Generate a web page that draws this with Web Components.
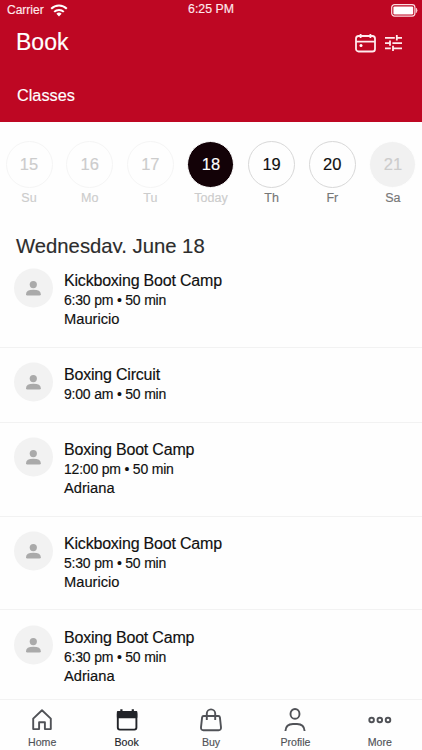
<!DOCTYPE html>
<html lang="en">
  <head>
    <meta charset="UTF-8" />
    <meta name="viewport" content="width=device-width, initial-scale=1.0" />
    <title>Book</title>
    <style>
      html,
      body {
        margin: 0;
        height: 100%;
      }
      body {
        display: flex;
        flex-direction: column;
        height: 750px;
        overflow: hidden;
        background: #fefefe;
        font-family: "Liberation Sans", Arial, sans-serif;
        color: #101010;
        -webkit-text-stroke: 0.15px;
      }
      day-strip,
      app-header,
      tab-bar {
        flex: none;
      }
    </style>
  </head>
  <body>
    <app-header heading="Book" section="Classes"></app-header>
    <day-strip>
      <day-item num="15" state="past">Su</day-item>
      <day-item num="16" state="past">Mo</day-item>
      <day-item num="17" state="past">Tu</day-item>
      <day-item num="18" state="today">Today</day-item>
      <day-item num="19">Th</day-item>
      <day-item num="20">Fr</day-item>
      <day-item num="21" state="empty">Sa</day-item>
    </day-strip>
    <class-list>
      <span slot="heading">Wednesday, June 18</span>
      <class-row name="Kickboxing Boot Camp" time="6:30 pm • 50 min">Mauricio</class-row>
      <class-row name="Boxing Circuit" time="9:00 am • 50 min"></class-row>
      <class-row name="Boxing Boot Camp" time="12:00 pm • 50 min">Adriana</class-row>
      <class-row name="Kickboxing Boot Camp" time="5:30 pm • 50 min">Mauricio</class-row>
      <class-row name="Boxing Boot Camp" time="6:30 pm • 50 min">Adriana</class-row>
    </class-list>
    <tab-bar>
      <tab-item icon="home">Home</tab-item>
      <tab-item icon="book" active>Book</tab-item>
      <tab-item icon="buy">Buy</tab-item>
      <tab-item icon="profile">Profile</tab-item>
      <tab-item icon="more">More</tab-item>
    </tab-bar>

    <script>
      const icons = {
        home: `<path d="M3.2 10.6 12 2.2l8.8 8.4v10.5h-5.9v-6.8H9.1v6.8H3.2z" />`,
        book: `<rect x="2.8" y="4" width="18.6" height="17.6" rx="2" />
          <path d="M2.8 4h18.6v5.2H2.8z" fill="currentColor" />
          <path d="M6.4 1.2v3M17.8 1.2v3" stroke-width="2.2" />`,
        buy: `<path d="M4.6 8h14.8q1.3 0 1.5 1.3l1.1 10.1q.2 2.8-2.4 2.8H4.4Q1.8 22.2 2 19.4L3.1 9.3Q3.3 8 4.6 8z" />
          <path d="M7.8 12V5.6a4.2 4.2 0 0 1 8.4 0V12" />`,
        profile: `<ellipse cx="12" cy="5.9" rx="4.5" ry="4.9" />
          <path d="M2.4 23q.4-7 7.6-7h4q7.2 0 7.6 7" />`,
        more: `<circle cx="3.6" cy="12" r="2.3" /><circle cx="11.8" cy="12" r="2.3" /><circle cx="20" cy="12" r="2.3" />`,
      };

      // attach an open shadow root and fill it
      function render(el, html) {
        el.attachShadow({ mode: "open" }).innerHTML = html;
      }

      class AppHeader extends HTMLElement {
        connectedCallback() {
          render(this, `
            <style>
              :host { display: block; height: 122px; background: #be0723; color: #fff; }
              .status { display: grid; grid-template-columns: 1fr auto 1fr; height: 20px; padding: 0 4px 0 7px; font-size: 12.3px; line-height: 20px; color: #ffe9ec; }
              .left { display: flex; align-items: center; gap: 6px; font-size: 12px; }
              .time { margin-right: 3px; line-height: 19px; }
              .battery { justify-self: end; align-self: center; }
              .bar { display: flex; align-items: center; justify-content: space-between; height: 45px; padding: 0 20px 0 16px; }
              h1 { margin: 0; font-size: 23px; font-weight: 400; }
              .actions { display: flex; gap: 9px; align-items: center; }
              .section { padding: 20px 17px 0; font-size: 16.3px; line-height: 20px; }
              svg { display: block; }
            </style>
            <div class="status">
              <div class="left"><span>Carrier</span>
                <svg width="18" height="13" viewBox="0 0 18 13" fill="none" stroke="#fff" stroke-width="2">
                  <path d="M1.2 4.8a11 11 0 0 1 15.6 0M4.2 7.9a6.8 6.8 0 0 1 9.6 0" />
                  <path d="M9 12.4 6.4 9.8a3.7 3.7 0 0 1 5.2 0z" fill="#fff" stroke="none" />
                </svg>
              </div>
              <span class="time">6:25 PM</span>
              <svg class="battery" width="27" height="13" viewBox="0 0 27 13">
                <rect x=".7" y=".7" width="23.2" height="11.4" rx="2.8" fill="none" stroke="#fbdde1" stroke-width="1.2" />
                <rect x="2.4" y="2.4" width="19.8" height="8" rx="1.2" fill="#fff" />
                <path d="M25.2 4q1.9 2.3 0 4.8z" fill="#fbdde1" stroke="#fbdde1" stroke-width=".5" />
              </svg>
            </div>
            <div class="bar">
              <h1>${this.getAttribute("heading")}</h1>
              <div class="actions">
                <svg width="21" height="20" viewBox="0 0 21 20" fill="none" stroke="#ffecef" stroke-width="1.8">
                  <rect x="1" y="3" width="19" height="15.5" rx="2.6" />
                  <path d="M1 8.6h19M5.6 1v4M15.4 1v4" />
                  <circle cx="6" cy="12.6" r="1.5" fill="#fff" stroke="none" />
                </svg>
                <svg width="17" height="16" viewBox="0 0 17 16" fill="none" stroke="#ffecef" stroke-width="1.8">
                  <path d="M0 2.8h9.8M11.8 0v5.4M11.8 2.8H17M0 8.2h5M5 5.4v5.4M7.4 8.2H17M0 13.4h5.8M8 10.8V16M8 13.4h9" />
                </svg>
              </div>
            </div>
            <div class="section">${this.getAttribute("section")}</div>
          `);
        }
      }

      class DayStrip extends HTMLElement {
        connectedCallback() {
          render(this, `
            <style>
              :host { display: flex; justify-content: space-between; height: 92px; box-sizing: border-box; padding: 19px 5px 0; }
            </style>
            <slot></slot>
          `);
        }
      }

      class DayItem extends HTMLElement {
        connectedCallback() {
          render(this, `
            <style>
              :host { display: flex; flex-direction: column; align-items: center; width: 48px; font-size: 12.5px; line-height: 15px; color: #777; }
              .num { box-sizing: border-box; width: 47px; height: 47px; margin-bottom: 3px; border: 1px solid #d8d8d8; border-radius: 50%; font-size: 16.5px; line-height: 45px; text-align: center; color: #101010; }
              :host([state="past"]) { color: #ccc; }
              :host([state="past"]) .num { border-color: #f5f5f5; color: #ccc; }
              :host([state="today"]) { color: #ccc; }
              :host([state="today"]) .num { background: #130207; border-color: #fefefe; color: #fff; }
              :host([state="empty"]) .num { background: #f1f1f1; border-color: #fefefe; color: #ccc; }
            </style>
            <div class="num">${this.getAttribute("num")}</div>
            <slot></slot>
          `);
        }
      }

      class ClassList extends HTMLElement {
        connectedCallback() {
          render(this, `
            <style>
              :host { display: block; flex: 1; min-height: 0; overflow: hidden; }
              /* the box is shorter than the line, so descenders are cut off */
              .heading { height: 19px; margin: 20px 0 1px; padding-left: 16px; overflow: hidden; font-size: 20.3px; line-height: 25px; color: #2c2c2c; }
            </style>
            <div class="heading"><slot name="heading"></slot></div>
            <slot></slot>
          `);
        }
      }

      class ClassRow extends HTMLElement {
        connectedCallback() {
          render(this, `
            <style>
              :host { display: flex; box-sizing: border-box; gap: 11px; height: 93.8px; padding: 14.4px 14px 0; border-bottom: 1px solid #f2f2f2; }
              :host(:empty) { height: 75px; }
              svg { flex: none; }
              .name { margin-top: 2px; font-size: 16px; line-height: 21px; letter-spacing: -0.2px; }
              .time { font-size: 14px; line-height: 19px; letter-spacing: -0.2px; }
              .who { font-size: 14.7px; line-height: 19px; }
            </style>
            <svg width="39" height="40" viewBox="0 0 39 40">
              <circle cx="19.5" cy="20" r="19.5" fill="#f2f2f2" />
              <g fill="#aaa">
                <circle cx="19.3" cy="16.6" r="3.6" />
                <path d="M12 26.2q0-4.4 7.4-4.4t7.4 4.4q0 1.4-1.4 1.4h-12q-1.4 0-1.4-1.4z" />
              </g>
            </svg>
            <div>
              <div class="name">${this.getAttribute("name")}</div>
              <div class="time">${this.getAttribute("time")}</div>
              <div class="who"><slot></slot></div>
            </div>
          `);
        }
      }

      class TabBar extends HTMLElement {
        connectedCallback() {
          render(this, `
            <style>
              :host { display: flex; box-sizing: border-box; height: 51px; border-top: 1px solid #f2f2f2; background: #fefefe; }
            </style>
            <slot></slot>
          `);
        }
      }

      class TabItem extends HTMLElement {
        connectedCallback() {
          render(this, `
            <style>
              :host { display: flex; flex: 1; flex-direction: column; align-items: center; padding-top: 8px; font-size: 10.6px; line-height: 12px; color: #505257; }
              :host([active]) { color: #222429; }
              svg { display: block; margin-bottom: 4px; }
            </style>
            <svg width="24" height="24" viewBox="0 0 24 24" fill="none" stroke="currentColor" stroke-width="1.9" stroke-linejoin="round">${icons[this.getAttribute("icon")]}</svg>
            <slot></slot>
          `);
        }
      }

      customElements.define("app-header", AppHeader);
      customElements.define("day-strip", DayStrip);
      customElements.define("day-item", DayItem);
      customElements.define("class-list", ClassList);
      customElements.define("class-row", ClassRow);
      customElements.define("tab-bar", TabBar);
      customElements.define("tab-item", TabItem);
    </script>
  </body>
</html>
